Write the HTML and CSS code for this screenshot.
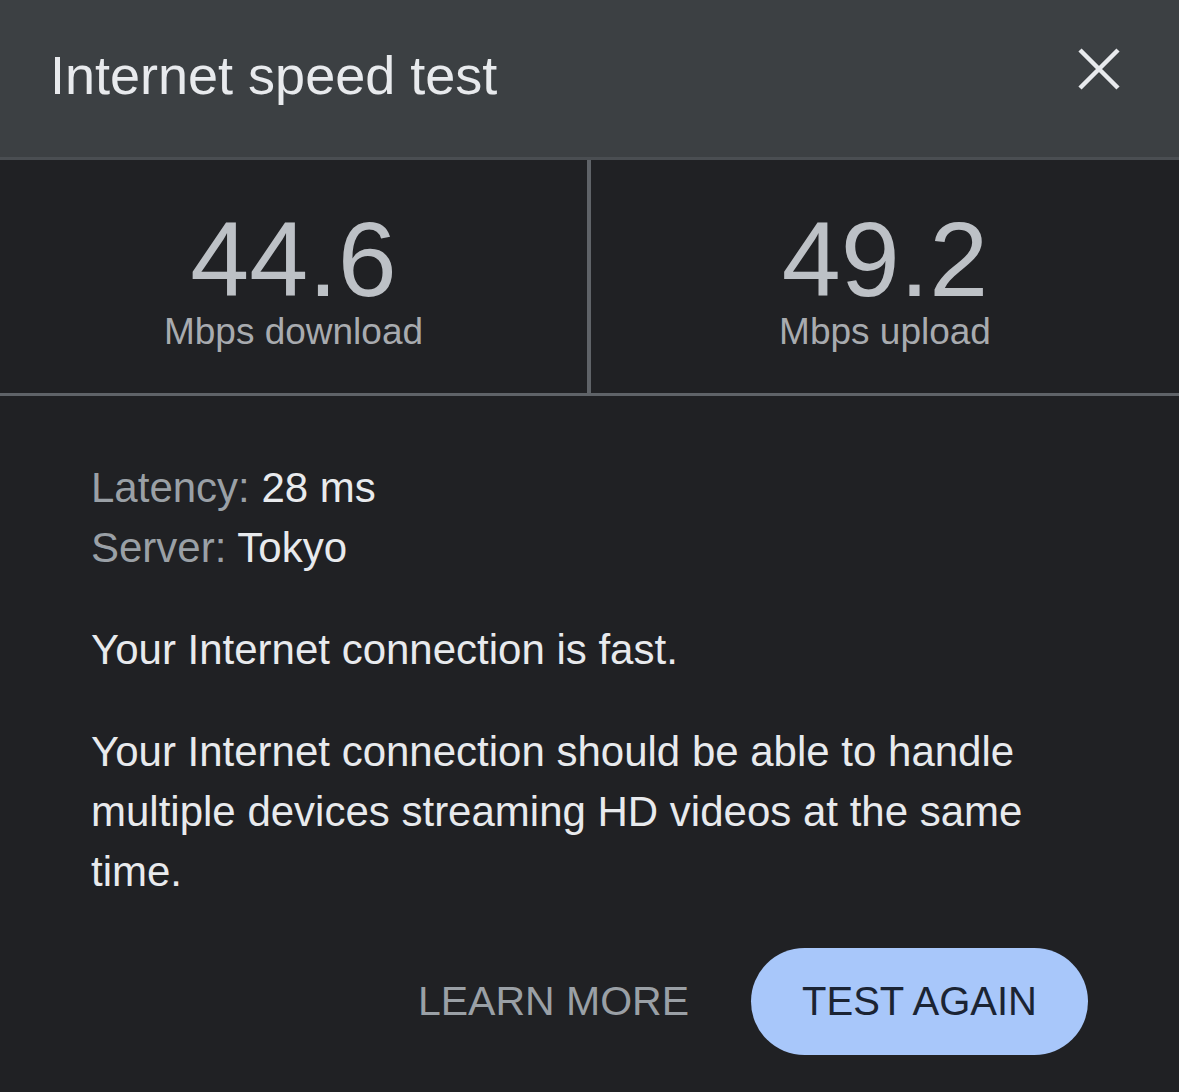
FILE: index.html
```html
<!DOCTYPE html>
<html lang="en">
  <head>
    <meta charset="UTF-8" />
    <title>Internet speed test</title>
    <link rel="stylesheet" href="styles.css">
  </head>
  <body>
    <div class="card">
      <div class="header">
        <h1 class="title">Internet speed test</h1>
        <button class="close-button" aria-label="Close">
          <svg width="44" height="44" viewBox="0 0 44 44">
            <path d="M3 3 L41 41 M41 3 L3 41" stroke="#e8eaed" stroke-width="4.5" fill="none" />
          </svg>
        </button>
      </div>

      <div class="stats">
        <div class="stat">
          <div class="stat-value">44.6</div>
          <div class="stat-label">Mbps download</div>
        </div>
        <div class="stat">
          <div class="stat-value">49.2</div>
          <div class="stat-label">Mbps upload</div>
        </div>
      </div>

      <div class="details">
        <p class="meta"><span class="meta-key">Latency:</span> 28 ms<br><span class="meta-key">Server:</span> Tokyo</p>
        <p class="summary">Your Internet connection is fast.</p>
        <p class="summary">Your Internet connection should be able to handle multiple devices streaming HD videos at the same time.</p>
      </div>

      <div class="actions">
        <button class="text-button">LEARN MORE</button>
        <button class="pill-button">TEST AGAIN</button>
      </div>
    </div>
  </body>
</html>
```

FILE: styles.css
```css
body {
  margin: 0;
  background-color: #202124;
  font-family: "Liberation Sans", Arial, sans-serif;
}
.card {
  width: 1179px;
  height: 1092px;
  background-color: #202124;
  overflow: hidden;
}
.header {
  height: 157px;
  background-color: #3c4043;
  border-bottom: 3px solid #4a4e52;
  display: flex;
  align-items: center;
  justify-content: space-between;
  padding: 0 58px 0 50px;
}
.title {
  margin: 0 0 8px 0;
  font-size: 54px;
  font-weight: normal;
  color: #e8eaed;
}
.close-button {
  background: none;
  border: none;
  padding: 0;
  margin-bottom: 20px;
  cursor: pointer;
  display: flex;
}
.stats {
  display: grid;
  grid-template-columns: 587px 1fr;
  height: 233px;
  border-bottom: 3px solid #5f6368;
}
.stat {
  display: flex;
  flex-direction: column;
  align-items: center;
  justify-content: center;
  padding-top: 4px;
}
.stat + .stat {
  border-left: 4px solid #5f6368;
}
.stat-value {
  font-size: 106px;
  line-height: 1;
  color: #bdc1c6;
}
.stat-label {
  font-size: 37px;
  line-height: 40px;
  color: #a8abaf;
}
.details {
  padding: 62px 90px 0 91px;
}
.details p {
  margin: 0;
  font-size: 42px;
  line-height: 60px;
  color: #e8eaed;
}
.meta-key {
  color: #9aa0a6;
}
.details .summary {
  margin-top: 42px;
}
.actions {
  display: flex;
  justify-content: flex-end;
  align-items: center;
  gap: 62px;
  padding: 46px 91px 0 0;
}
.text-button {
  background: none;
  border: none;
  padding: 0;
  font-family: inherit;
  font-size: 41px;
  color: #9aa0a6;
  cursor: pointer;
}
.pill-button {
  width: 337px;
  height: 107px;
  border: none;
  border-radius: 54px;
  background-color: #a8c7fa;
  font-family: inherit;
  font-size: 40px;
  color: #1b2433;
  cursor: pointer;
}
```
